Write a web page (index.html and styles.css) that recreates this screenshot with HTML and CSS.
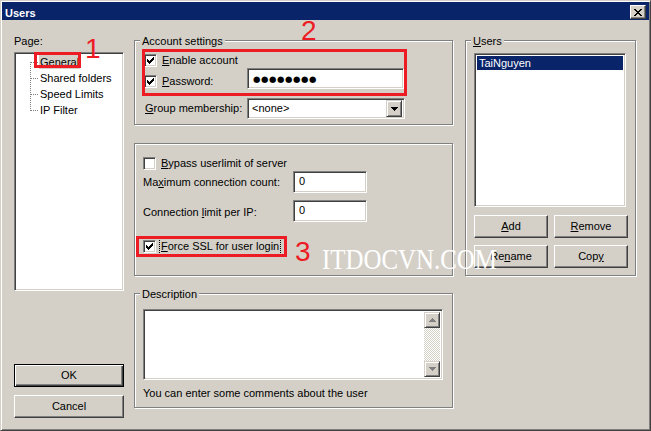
FILE: index.html
```html
<!DOCTYPE html>
<html lang="en">
<head>
  <meta charset="UTF-8">
  <title>Users</title>
  <link rel="stylesheet" href="styles.css">
</head>
<body>
  <div class="screen">
    <div class="window">
      <div class="titlebar">
        <span class="title">Users</span>
        <span class="close-btn">
          <svg width="8" height="7" viewBox="0 0 8 7"><path d="M0 0h2v1h-2z M6 0h2v1h-2z M1 1h2v1h-2z M5 1h2v1h-2z M2 2h4v1h-4z M3 3h2v1h-2z M2 4h4v1h-4z M1 5h2v1h-2z M5 5h2v1h-2z M0 6h2v1h-2z M6 6h2v1h-2z"/></svg>
        </span>
      </div>

      <div class="dialog">
        <!-- page tree + OK / Cancel -->
        <div class="col-left">
          <div class="page-label">Page:</div>
          <div class="field tree">
            <ul>
              <li><span class="item selected">General</span></li>
              <li><span class="item">Shared folders</span></li>
              <li><span class="item">Speed Limits</span></li>
              <li><span class="item">IP Filter</span></li>
            </ul>
          </div>
          <button class="btn btn-default ok-btn">OK</button>
          <button class="btn cancel-btn">Cancel</button>
        </div>

        <!-- settings -->
        <div class="col-mid">
          <div class="group account">
            <div class="group-title">Account settings</div>
            <div class="row row-enable">
              <span class="check"><svg width="7" height="7" viewBox="0 0 7 7"><path d="M0 2H1V3H2V4H3V3H4V2H5V1H6V0H7V3H6V4H5V5H4V6H3V7H2V6H1V5H0Z"/></svg></span>
              <span class="check-label"><u>E</u>nable account</span>
            </div>
            <div class="row row-pass">
              <div class="label-col">
                <span class="check"><svg width="7" height="7" viewBox="0 0 7 7"><path d="M0 2H1V3H2V4H3V3H4V2H5V1H6V0H7V3H6V4H5V5H4V6H3V7H2V6H1V5H0Z"/></svg></span>
                <span class="check-label"><u>P</u>assword:</span>
              </div>
              <div class="field pass-field"><span class="dots">●●●●●●●●</span></div>
            </div>
            <div class="row row-group">
              <div class="label-col"><span><u>G</u>roup membership:</span></div>
              <div class="field combo">
                <span class="combo-text">&lt;none&gt;</span>
                <span class="combo-btn"><svg width="7" height="4" viewBox="0 0 7 4"><path d="M0 0H7V1H6V2H5V3H4V4H3V3H2V2H1V1H0Z"/></svg></span>
              </div>
            </div>
          </div>

          <div class="group limits">
            <div class="row row-bypass">
              <span class="check"></span>
              <span class="check-label"><u>B</u>ypass userlimit of server</span>
            </div>
            <div class="row row-max">
              <div class="label-col"><span>Ma<u>x</u>imum connection count:</span></div>
              <div class="field num-field">0</div>
            </div>
            <div class="row row-conn">
              <div class="label-col"><span>Connection <u>l</u>imit per IP:</span></div>
              <div class="field num-field">0</div>
            </div>
            <div class="row row-ssl">
              <span class="check"><svg width="7" height="7" viewBox="0 0 7 7"><path d="M0 2H1V3H2V4H3V3H4V2H5V1H6V0H7V3H6V4H5V5H4V6H3V7H2V6H1V5H0Z"/></svg></span>
              <span class="check-label focused"><u>F</u>orce SSL for user login</span>
            </div>
          </div>

          <div class="group description">
            <div class="group-title">Description</div>
            <div class="field memo">
              <div class="vscroll">
                <span class="sb-btn"><svg width="7" height="4" viewBox="0 0 7 4"><path d="M3 0H4V1H5V2H6V3H7V4H0V3H1V2H2V1H3Z"/></svg></span>
                <span class="sb-track"></span>
                <span class="sb-btn"><svg width="7" height="4" viewBox="0 0 7 4"><path d="M0 0H7V1H6V2H5V3H4V4H3V3H2V2H1V1H0Z"/></svg></span>
              </div>
            </div>
            <div class="hint">You can enter some comments about the user</div>
          </div>
        </div>

        <!-- users list -->
        <div class="col-right">
          <div class="group users">
            <div class="group-title"><u>U</u>sers</div>
            <div class="field listbox">
              <div class="list-item selected">TaiNguyen</div>
            </div>
            <div class="btn-row">
              <button class="btn small-btn"><u>A</u>dd</button>
              <button class="btn small-btn"><u>R</u>emove</button>
            </div>
            <div class="btn-row">
              <button class="btn small-btn">Re<u>n</u>ame</button>
              <button class="btn small-btn">Cop<u>y</u></button>
            </div>
          </div>
        </div>
      </div>
    </div>

    <!-- annotations drawn over the screenshot -->
    <div class="mark mark-1"></div>
    <div class="mark mark-2"></div>
    <div class="mark mark-3"></div>
    <div class="mark-num num-1">1</div>
    <div class="mark-num num-2">2</div>
    <div class="mark-num num-3">3</div>
    <div class="watermark">ITDOCVN.COM</div>
  </div>
</body>
</html>
```

FILE: styles.css
```css
* {
  box-sizing: border-box;
}

html, body {
  margin: 0;
}

body {
  font-family: "Liberation Sans", Arial, sans-serif;
  font-size: 11px;
  line-height: 13px;
  color: #000;
  background: #d4d0c8;
}

.screen {
  position: relative;
  width: 651px;
  height: 431px;
}

.window {
  width: 651px;
  height: 431px;
  background: #d4d0c8;
  border: 1px solid;
  border-color: #d4d0c8 #404040 #404040 #d4d0c8;
  box-shadow: inset 1px 1px #fff, inset -1px -1px #808080;
  padding: 1px;
}

/* title bar */
.titlebar {
  height: 18px;
  background: #0a246a;
  color: #fff;
  display: flex;
  justify-content: space-between;
  align-items: flex-start;
  padding: 0 3px;
}

.title {
  font-weight: bold;
  margin-top: 4px;
  line-height: 14px;
}

.close-btn {
  margin-top: 3px;
  width: 16px;
  height: 14px;
  display: flex;
  align-items: center;
  justify-content: center;
  background: #d4d0c8;
  border: 1px solid;
  border-color: #fff #404040 #404040 #fff;
  box-shadow: inset -1px -1px #808080;
}

.close-btn svg {
  display: block;
  margin: 0 0 0 -1px;
}

/* layout */
.dialog {
  display: flex;
  align-items: flex-start;
  padding: 20px 0 0 12px;
}

.col-left {
  width: 110px;
  margin-right: 10px;
  display: flex;
  flex-direction: column;
}

.col-mid {
  width: 319px;
  margin-right: 12px;
}

.col-right {
  width: 171px;
}

/* sunken field */
.field {
  background: #fff;
  border: 1px solid;
  border-color: #808080 #fff #fff #808080;
  box-shadow: inset 1px 1px #404040, inset -1px -1px #d4d0c8;
}

/* group boxes */
.group {
  border: 1px solid #808080;
  box-shadow: inset 1px 1px #fff, 1px 1px #fff;
}

.group-title {
  width: fit-content;
  margin: -6px 0 0 5px;
  padding: 0 2px;
  background: #d4d0c8;
  line-height: 13px;
}

.row {
  display: flex;
  align-items: center;
}

.label-col {
  display: flex;
  align-items: center;
  flex: none;
  white-space: nowrap;
}

.check {
  flex: none;
  width: 13px;
  height: 13px;
  display: flex;
  align-items: center;
  justify-content: center;
  background: #fff;
  border: 1px solid;
  border-color: #808080 #fff #fff #808080;
  box-shadow: inset 1px 1px #404040, inset -1px -1px #d4d0c8;
}

.check svg {
  display: block;
}

.check-label {
  margin-left: 3px;
  padding: 0 1px;
  border: 1px solid transparent;
  line-height: 15px;
  white-space: nowrap;
}

.check-label.focused {
  border: 1px dotted #000;
}

/* account settings */
.account {
  padding-bottom: 5px;
}

.account .row {
  margin-left: 9px;
}

.row-enable {
  margin-top: 4px;
  height: 16px;
}

.row-pass {
  height: 21px;
  align-items: flex-start;
}

.row-pass .label-col {
  width: 103px;
  height: 16px;
  margin-top: 5px;
}

.pass-field {
  width: 157px;
  height: 21px;
  display: flex;
  align-items: center;
  padding-left: 5px;
}

.dots {
  font-family: "DejaVu Sans", sans-serif;
  font-size: 8.5px;
  line-height: 10px;
  letter-spacing: 0.6px;
}

.row-group {
  margin-top: 9px;
  height: 21px;
}

.row-group .label-col {
  width: 103px;
  padding-left: 1px;
}

.combo {
  width: 158px;
  height: 21px;
  display: flex;
  align-items: center;
  justify-content: space-between;
  padding: 2px;
}

.combo-text {
  padding-left: 2px;
}

.combo-btn {
  width: 16px;
  height: 17px;
  display: flex;
  align-items: center;
  justify-content: center;
  background: #d4d0c8;
  border: 1px solid;
  border-color: #d4d0c8 #404040 #404040 #d4d0c8;
  box-shadow: inset 1px 1px #fff, inset -1px -1px #808080;
}

.combo-btn svg,
.sb-btn svg {
  display: block;
}

/* limits */
.limits {
  margin-top: 18px;
  padding: 11px 0 19px;
}

.limits .row {
  margin-left: 8px;
}

.row-bypass {
  height: 16px;
}

.row-max,
.row-conn {
  height: 22px;
}

.row-conn {
  margin-top: 7px;
}

.limits .label-col {
  width: 150px;
}

.row-conn .label-col {
  padding-top: 3px;
}

.num-field {
  width: 74px;
  height: 22px;
  padding: 3px 0 0 5px;
}

.row-ssl {
  margin-top: 14px;
  height: 20px;
}

/* description */
.description {
  margin-top: 17px;
  padding-bottom: 7px;
}

.memo {
  width: 300px;
  height: 71px;
  margin: 8px 0 0 8px;
  padding: 2px;
  display: flex;
  justify-content: flex-end;
}

.vscroll {
  width: 16px;
  display: flex;
  flex-direction: column;
}

.sb-btn {
  height: 16px;
  display: flex;
  align-items: center;
  justify-content: center;
  background: #d4d0c8;
  border: 1px solid;
  border-color: #d4d0c8 #404040 #404040 #d4d0c8;
  box-shadow: inset 1px 1px #fff, inset -1px -1px #808080;
  fill: #808080;
}

.sb-track {
  flex: 1;
  background: repeating-conic-gradient(#fff 0 25%, #d4d0c8 0 50%) 0 0 / 2px 2px;
}

.hint {
  margin: 7px 0 0 8px;
}

/* left column */
.page-label {
  margin-top: -5px;
}

.tree {
  margin-top: 4px;
  height: 239px;
  padding: 2px;
}

.tree ul {
  position: relative;
  list-style: none;
  margin: 0 0 0 13px;
  padding: 0;
}

.tree ul::before {
  content: "";
  position: absolute;
  left: 0;
  top: 7px;
  bottom: 8px;
  border-left: 1px dotted #808080;
}

.tree li {
  position: relative;
  height: 16px;
  line-height: 14px;
  padding-left: 9px;
  white-space: nowrap;
}

.tree li::before {
  content: "";
  position: absolute;
  left: 1px;
  top: 7px;
  width: 7px;
  border-top: 1px dotted #808080;
}

.item {
  display: inline-block;
  padding: 0 1px;
}

.item.selected {
  background: #d4d0c8;
}

/* buttons */
.btn {
  display: block;
  padding: 0;
  font: inherit;
  line-height: 13px;
  color: #000;
  background: #d4d0c8;
  border: 1px solid;
  border-color: #fff #404040 #404040 #fff;
  box-shadow: inset -1px -1px #808080;
}

.btn-default {
  border: 1px solid #000;
  box-shadow: inset 1px 1px #fff, inset -1px -1px #404040, inset -2px -2px #808080;
}

.ok-btn,
.cancel-btn {
  width: 110px;
  height: 23px;
}

.ok-btn {
  margin-top: 73px;
}

.cancel-btn {
  margin-top: 8px;
}

/* users */
.users {
  padding-bottom: 7px;
}

.listbox {
  width: 152px;
  height: 154px;
  margin: 5px 0 0 8px;
  padding: 2px;
}

.list-item {
  height: 14px;
  line-height: 14px;
  padding-left: 2px;
}

.list-item.selected {
  background: #0a246a;
  color: #fff;
}

.btn-row {
  display: flex;
  gap: 6px;
  margin: 8px 0 0 8px;
}

.btn-row + .btn-row {
  margin-top: 7px;
}

.small-btn {
  width: 74px;
  height: 23px;
}

/* annotations */
.mark {
  position: absolute;
  border: 3px solid #ed1c24;
}

.mark-1 {
  left: 34px;
  top: 52px;
  width: 47px;
  height: 16px;
}

.mark-2 {
  left: 142px;
  top: 49px;
  width: 265px;
  height: 47px;
}

.mark-3 {
  left: 136px;
  top: 236px;
  width: 151px;
  height: 21px;
}

.mark-num {
  position: absolute;
  color: #ed1c24;
  font-family: "Liberation Sans", Arial, sans-serif;
  font-size: 28px;
  line-height: 28px;
}

.num-1 { left: 85px; top: 35px; }
.num-2 { left: 301px; top: 17px; }
.num-3 { left: 295px; top: 238px; }

.watermark {
  position: absolute;
  left: 322px;
  top: 244px;
  color: #fff;
  font-family: "Liberation Serif", "Times New Roman", serif;
  font-size: 30px;
  line-height: 30px;
  white-space: nowrap;
  transform: scaleX(0.83);
  transform-origin: left top;
}
```
